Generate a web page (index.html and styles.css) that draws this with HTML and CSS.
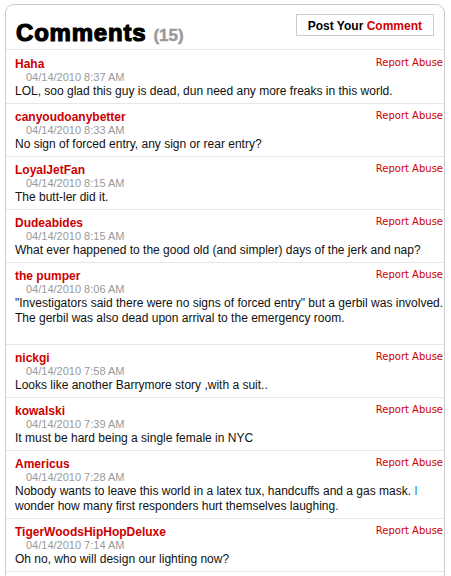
FILE: index.html
```html
<!DOCTYPE html>
<html>
<head>
<meta charset="utf-8">
<link rel="stylesheet" href="styles.css">
</head>
<body>
<div class="panel">
  <div class="panel-head">
    <h1 class="title">Comments<span class="count">(15)</span></h1>
    <a class="post-btn" href="#">Post Your <span class="red">Comment</span></a>
  </div>
  <ul class="comments">
    <li class="comment">
      <div class="c-top"><span class="c-name">Haha</span><a class="c-report" href="#">Report Abuse</a></div>
      <div class="c-date">04/14/2010 8:37 AM</div>
      <p class="c-body">LOL, soo glad this guy is dead, dun need any more freaks in this world.</p>
    </li>
    <li class="comment">
      <div class="c-top"><span class="c-name">canyoudoanybetter</span><a class="c-report" href="#">Report Abuse</a></div>
      <div class="c-date">04/14/2010 8:33 AM</div>
      <p class="c-body">No sign of forced entry, any sign or rear entry?</p>
    </li>
    <li class="comment">
      <div class="c-top"><span class="c-name">LoyalJetFan</span><a class="c-report" href="#">Report Abuse</a></div>
      <div class="c-date">04/14/2010 8:15 AM</div>
      <p class="c-body">The butt-ler did it.</p>
    </li>
    <li class="comment">
      <div class="c-top"><span class="c-name">Dudeabides</span><a class="c-report" href="#">Report Abuse</a></div>
      <div class="c-date">04/14/2010 8:15 AM</div>
      <p class="c-body">What ever happened to the good old (and simpler) days of the jerk and nap?</p>
    </li>
    <li class="comment">
      <div class="c-top"><span class="c-name">the pumper</span><a class="c-report" href="#">Report Abuse</a></div>
      <div class="c-date">04/14/2010 8:06 AM</div>
      <p class="c-body c-body-lines c-body-gap">"Investigators said there were no signs of forced entry" but a gerbil was involved.<br>The gerbil was also dead upon arrival to the emergency room.</p>
    </li>
    <li class="comment">
      <div class="c-top"><span class="c-name">nickgi</span><a class="c-report" href="#">Report Abuse</a></div>
      <div class="c-date">04/14/2010 7:58 AM</div>
      <p class="c-body">Looks like another Barrymore story ,with a suit..</p>
    </li>
    <li class="comment">
      <div class="c-top"><span class="c-name">kowalski</span><a class="c-report" href="#">Report Abuse</a></div>
      <div class="c-date">04/14/2010 7:39 AM</div>
      <p class="c-body">It must be hard being a single female in NYC</p>
    </li>
    <li class="comment">
      <div class="c-top"><span class="c-name">Americus</span><a class="c-report" href="#">Report Abuse</a></div>
      <div class="c-date">04/14/2010 7:28 AM</div>
      <p class="c-body c-body-lines">Nobody wants to leave this world in a latex tux, handcuffs and a gas mask. <span class="blue">I</span><br>wonder how many first responders hurt themselves laughing.</p>
    </li>
    <li class="comment">
      <div class="c-top"><span class="c-name">TigerWoodsHipHopDeluxe</span><a class="c-report" href="#">Report Abuse</a></div>
      <div class="c-date">04/14/2010 7:14 AM</div>
      <p class="c-body">Oh no, who will design our lighting now?</p>
    </li>
  </ul>
</div>
</body>
</html>
```

FILE: styles.css
```css
html, body {
  margin: 0;
  padding: 0;
  background: #ffffff;
}

body {
  font-family: "Liberation Sans", Arial, Helvetica, sans-serif;
  color: #111;
}

.panel {
  margin: 4px 0 0 5px;
  width: 440px;
  box-sizing: border-box;
  padding-bottom: 20px;
  border: 1px solid #cccccc;
  border-bottom: none;
  border-radius: 9px 9px 0 0;
}

.panel-head {
  display: flex;
  justify-content: space-between;
  align-items: flex-start;
  height: 44px;
  border-bottom: 1px solid #e6e6e6;
}

.title {
  margin: 16px 0 0 10px;
  font-size: 24px;
  line-height: 24px;
  font-weight: bold;
  color: #000;
  letter-spacing: 0.8px;
  -webkit-text-stroke: 1.2px #000;
}

.count {
  margin-left: 7px;
  font-size: 17px;
  color: #999999;
  letter-spacing: 0;
  -webkit-text-stroke: 0.4px #999999;
}

.post-btn {
  margin: 9px 10px 0 0;
  padding: 2px 11px 0;
  line-height: 18px;
  border: 1px solid #cccccc;
  font-size: 12px;
  font-weight: bold;
  color: #000;
  text-decoration: none;
  white-space: nowrap;
}

.red {
  color: #cc0000;
}

.comments {
  list-style: none;
  margin: 0;
  padding: 1px 0 0;
}

.comment {
  padding: 6px 1px 4px 9px;
  border-bottom: 1px solid #e6e6e6;
}

.c-top {
  display: flex;
  justify-content: space-between;
  align-items: flex-start;
  height: 14px;
}

.c-name {
  font-size: 12px;
  line-height: 14px;
  font-weight: bold;
  color: #cc0000;
}

.c-report {
  font-family: "DejaVu Sans", Verdana, sans-serif;
  font-size: 10px;
  line-height: 12px;
  color: #cc0000;
  text-decoration: none;
}

.c-date {
  margin-left: 11px;
  font-size: 11px;
  line-height: 13px;
  color: #999999;
}

.c-body {
  margin: 0;
  font-size: 12px;
  line-height: 15px;
  color: #111;
}

.c-body-lines {
  white-space: nowrap;
}

.c-body-gap {
  margin-bottom: 14px;
}

.blue {
  color: #2f7fd6;
}
```
